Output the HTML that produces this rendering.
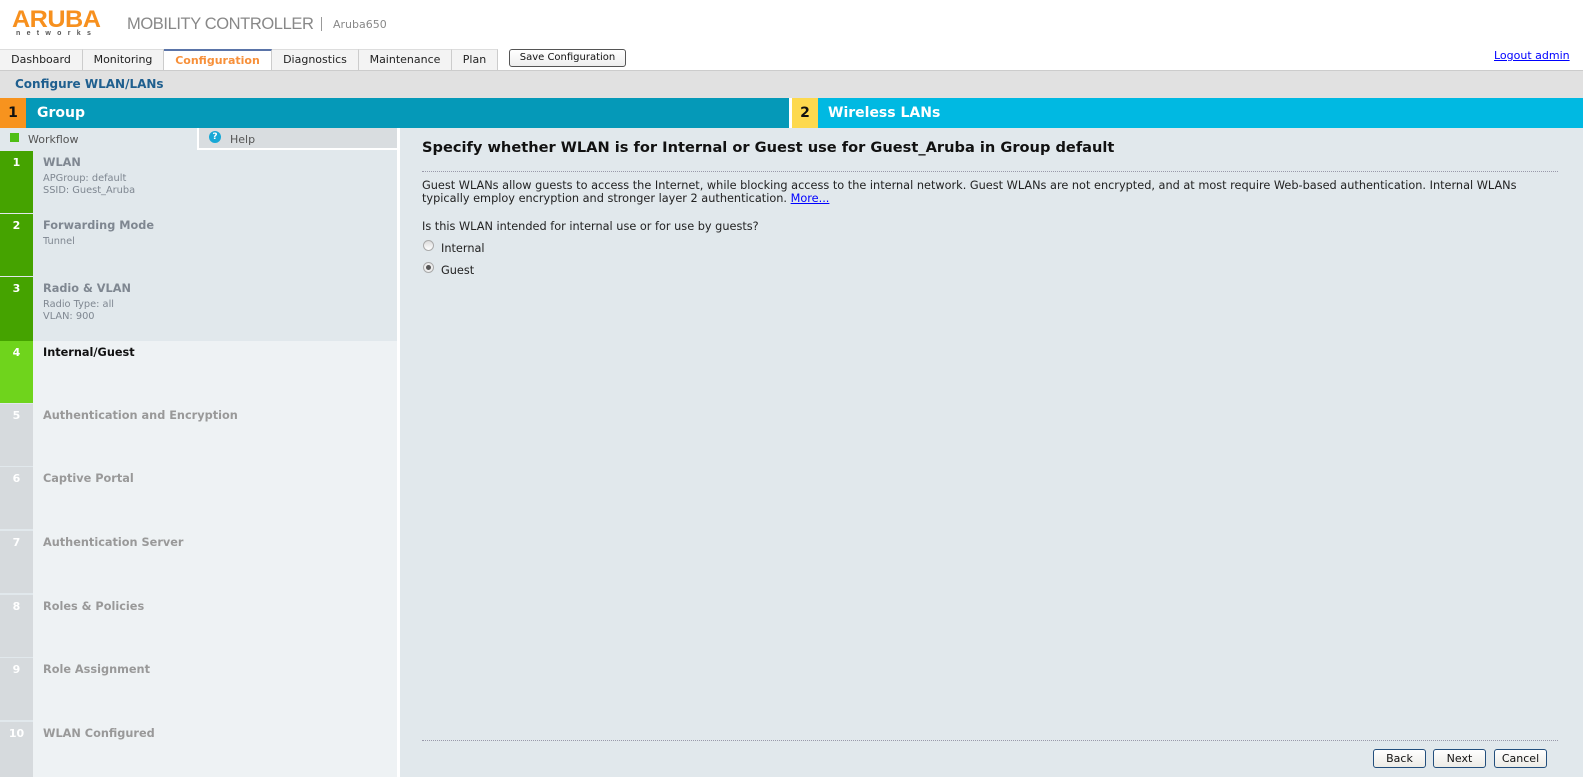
<!DOCTYPE html>
<html><head><meta charset="utf-8"><style>
*{margin:0;padding:0;box-sizing:border-box}
body{width:1583px;height:777px;overflow:hidden;background:#fff;font-family:"DejaVu Sans",Verdana,sans-serif;position:relative}
.abs{position:absolute}
.tab{position:absolute;top:49px;height:21px;background:#f3f3f3;border-right:1px solid #ccc;border-top:1px solid #ddd;font-size:11px;color:#222;text-align:center;line-height:20px}
.step{position:absolute;left:0;width:397px}
.num{position:absolute;left:0;top:0;width:33px;height:100%;color:#fff;font-weight:bold;font-size:11px;text-align:center;padding-top:5px}
.st{position:absolute;left:43px;top:5px;font-size:11.3px;font-weight:bold;color:#7f8791}
.sub{position:absolute;left:43px;top:22px;font-size:9.8px;color:#7f8791;line-height:12px}
.btn{position:absolute;top:749px;height:19px;border:1px solid #234f7d;border-radius:3px;background:linear-gradient(#fff,#ecebe6);font-size:11px;text-align:center;line-height:17px;color:#111}
</style></head><body>
<!-- logo -->
<div class="abs" style="left:12px;top:9px;font:900 24px 'Liberation Sans',sans-serif;color:#f7901e;letter-spacing:-0.5px;line-height:22px;transform:scaleX(1.05);transform-origin:left">ARUBA</div>
<div class="abs" style="left:16px;top:30px;font:bold 7px 'Liberation Sans',sans-serif;color:#555;letter-spacing:6.3px">networks</div>
<div class="abs" style="left:127px;top:15px;font:16.5px 'Liberation Sans',sans-serif;color:#888;letter-spacing:-0.4px">MOBILITY CONTROLLER</div>
<div class="abs" style="left:321px;top:17px;width:1px;height:14px;background:#999"></div>
<div class="abs" style="left:333px;top:18px;font-size:11px;color:#888">Aruba650</div>
<!-- tabs -->
<div class="tab" style="left:0;width:83px">Dashboard</div>
<div class="tab" style="left:83px;width:81px">Monitoring</div>
<div class="tab" style="left:164px;width:108px;background:#fff;border-top:2px solid #5a74a8;color:#f7903a;font-weight:bold;line-height:19px">Configuration</div>
<div class="tab" style="left:272px;width:87px">Diagnostics</div>
<div class="tab" style="left:359px;width:93px">Maintenance</div>
<div class="tab" style="left:452px;width:46px">Plan</div>
<div class="abs" style="left:509px;top:49px;width:117px;height:18px;border:1px solid #555;border-radius:3px;background:linear-gradient(#fff,#eee);font-size:10px;text-align:center;line-height:16px;color:#111">Save Configuration</div>
<div class="abs" style="left:1494px;top:49px;font-size:11px;color:#00f;text-decoration:underline;white-space:nowrap">Logout admin</div>
<!-- gray bar -->
<div class="abs" style="left:0;top:70px;width:1583px;height:28px;background:#e1e1e1;border-top:1px solid #ccc"></div>
<div class="abs" style="left:15px;top:77px;font-size:12px;font-weight:bold;color:#1f5f8f">Configure WLAN/LANs</div>
<!-- step bar -->
<div class="abs" style="left:0;top:98px;width:789px;height:30px;background:#0599b8"></div>
<div class="abs" style="left:0;top:98px;width:26px;height:30px;background:#f7931e;font:bold 14px 'DejaVu Sans';text-align:center;line-height:30px;color:#111">1</div>
<div class="abs" style="left:37px;top:98px;font-weight:bold;font-size:14px;line-height:30px;color:#fff">Group</div>
<div class="abs" style="left:792px;top:98px;width:791px;height:30px;background:#00b9e2"></div>
<div class="abs" style="left:792px;top:98px;width:26px;height:30px;background:#fdd94e;font:bold 14px 'DejaVu Sans';text-align:center;line-height:30px;color:#111">2</div>
<div class="abs" style="left:828px;top:98px;font-weight:bold;font-size:14px;line-height:30px;color:#fff">Wireless LANs</div>
<!-- main panel -->
<div class="abs" style="left:0;top:128px;width:1583px;height:649px;background:#e1e8ec"></div>
<div class="abs" style="left:397px;top:128px;width:3px;height:649px;background:#fff"></div>
<div class="abs" style="left:10px;top:133px;width:9px;height:9px;background:#4fbe14"></div>
<div class="abs" style="left:28px;top:133px;font-size:11px;color:#555">Workflow</div>
<div class="abs" style="left:197px;top:128px;width:200px;height:22px;background:#d9dde0;border-left:2px solid #fff;border-bottom:2px solid #fff"></div>
<div class="abs" style="left:209px;top:131px;width:12px;height:12px;border-radius:50%;background:#17a8d6;color:#fff;font-size:9px;font-weight:bold;text-align:center;line-height:12px">?</div>
<div class="abs" style="left:230px;top:133px;font-size:11px;color:#555">Help</div>
<!-- steps -->
<div class="step" style="top:151px;height:62px"><div class="num" style="background:#45a300">1</div><div class="st">WLAN</div><div class="sub">APGroup: default<br>SSID: Guest_Aruba</div></div>
<div class="step" style="top:214px;height:62px"><div class="num" style="background:#45a300">2</div><div class="st">Forwarding Mode</div><div class="sub">Tunnel</div></div>
<div class="step" style="top:277px;height:64px"><div class="num" style="background:#45a300">3</div><div class="st">Radio &amp; VLAN</div><div class="sub">Radio Type: all<br>VLAN: 900</div></div>
<div class="abs" style="left:33px;top:341px;width:364px;height:436px;background:#eef2f4"></div>
<div class="step" style="top:341px;height:62px"><div class="num" style="background:#6fd41c">4</div><div class="st" style="color:#111">Internal/Guest</div></div>
<div class="step" style="top:404px;height:62px"><div class="num" style="background:#d6dadd">5</div><div class="st" style="color:#999">Authentication and Encryption</div></div>
<div class="step" style="top:467px;height:62px"><div class="num" style="background:#d6dadd">6</div><div class="st" style="color:#999">Captive Portal</div></div>
<div class="step" style="top:531px;height:62px"><div class="num" style="background:#d6dadd">7</div><div class="st" style="color:#999">Authentication Server</div></div>
<div class="step" style="top:595px;height:62px"><div class="num" style="background:#d6dadd">8</div><div class="st" style="color:#999">Roles &amp; Policies</div></div>
<div class="step" style="top:658px;height:62px"><div class="num" style="background:#d6dadd">9</div><div class="st" style="color:#999">Role Assignment</div></div>
<div class="step" style="top:722px;height:55px"><div class="num" style="background:#d6dadd">10</div><div class="st" style="color:#999">WLAN Configured</div></div>
<!-- right content -->
<div class="abs" style="left:422px;top:139px;font-size:14.6px;font-weight:bold;color:#111;white-space:nowrap">Specify whether WLAN is for Internal or Guest use for Guest_Aruba in Group default</div>
<div class="abs" style="left:422px;top:171px;width:1136px;border-top:1px dotted #99a"></div>
<div class="abs" style="left:422px;top:179px;width:1135px;font-size:11.3px;line-height:13px;color:#222">Guest WLANs allow guests to access the Internet, while blocking access to the internal network. Guest WLANs are not encrypted, and at most require Web-based authentication. Internal WLANs typically employ encryption and stronger layer 2 authentication. <span style="color:#00f;text-decoration:underline">More...</span></div>
<div class="abs" style="left:422px;top:220px;font-size:11.3px;color:#222">Is this WLAN intended for internal use or for use by guests?</div>
<div class="abs" style="left:423px;top:240px;width:11px;height:11px;border-radius:50%;border:1px solid #aaa;background:linear-gradient(#ddd,#fff)"></div>
<div class="abs" style="left:441px;top:242px;font-size:11.3px;color:#222">Internal</div>
<div class="abs" style="left:423px;top:262px;width:11px;height:11px;border-radius:50%;border:1px solid #aaa;background:#eee"><div style="margin:2px;width:5px;height:5px;border-radius:50%;background:#555"></div></div>
<div class="abs" style="left:441px;top:264px;font-size:11.3px;color:#222">Guest</div>
<div class="abs" style="left:422px;top:740px;width:1136px;border-top:1px dotted #99a"></div>
<div class="btn" style="left:1373px;width:53px">Back</div>
<div class="btn" style="left:1433px;width:53px">Next</div>
<div class="btn" style="left:1494px;width:53px">Cancel</div>
</body></html>
